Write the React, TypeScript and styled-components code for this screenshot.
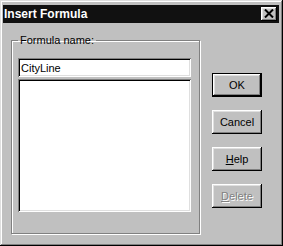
import styled, { createGlobalStyle, css } from 'styled-components';

const GlobalStyle = createGlobalStyle`
  html, body {
    margin: 0;
    padding: 0;
    background: #c0c0c0;
  }
  body {
    font-family: 'Liberation Sans', Arial, sans-serif;
    font-size: 11px;
  }
`;

const SWindow = styled.div`
  width: 283px;
  height: 246px;
  box-sizing: border-box;
  padding: 5px 4px 4px 3px;
  background: #c0c0c0;
  box-shadow: inset -1px -1px #000, inset 1px 1px #dfdfdf,
    inset -2px -2px #808080, inset 2px 2px #fff;
  display: flex;
  flex-direction: column;
`;

const STitleBar = styled.div`
  height: 18px;
  background: #111;
  display: flex;
  align-items: center;
  justify-content: space-between;
  padding: 0 2px 0 1px;
`;

const STitle = styled.span`
  color: #fff;
  font-weight: bold;
  font-size: 12px;
`;

const SCloseButton = styled.div`
  width: 16px;
  height: 14px;
  box-sizing: border-box;
  background: #c0c0c0;
  box-shadow: inset -1px -1px #000, inset 1px 1px #fff,
    inset -2px -2px #808080, inset 2px 2px #dfdfdf;
  display: flex;
  align-items: center;
  justify-content: center;
  padding: 0 1px 1px 0;
`;

const SBody = styled.div`
  display: flex;
  align-items: flex-start;
  padding: 11px 0 0 8px;
  gap: 12px;
`;

const SGroup = styled.fieldset`
  margin: 0;
  width: 189px;
  box-sizing: border-box;
  padding: 11px 8px 21px 6px;
  border: 1px solid #808080;
  box-shadow: inset 1px 1px #fff, 1px 1px #fff;
  display: flex;
  flex-direction: column;
  gap: 2px;
`;

const SLegend = styled.legend`
  padding: 0 2px;
  line-height: 13px;
  color: #000;
`;

const sunken = css`
  box-sizing: border-box;
  background: #fff;
  border: none;
  box-shadow: inset 1px 1px #808080, inset -1px -1px #fff,
    inset 2px 2px #000, inset -2px -2px #dfdfdf;
`;

const SInput = styled.div`
  ${sunken}
  height: 19px;
  padding: 0 3px;
  display: flex;
  align-items: center;
  color: #000;
`;

const SList = styled.div`
  ${sunken}
  height: 133px;
`;

const SButtons = styled.div`
  display: flex;
  flex-direction: column;
  gap: 13px;
  margin-top: 39px;
`;

const SButton = styled.div<{ $default?: boolean; $disabled?: boolean }>`
  width: 50px;
  height: 24px;
  box-sizing: border-box;
  display: flex;
  align-items: center;
  justify-content: center;
  color: ${(p) => (p.$disabled ? '#808080' : '#000')};
  ${(p) =>
    p.$disabled &&
    css`
      text-shadow: 1px 1px #fff;
    `}
  box-shadow: inset -1px -1px #000, inset 1px 1px #fff,
    inset -2px -2px #808080, inset 2px 2px #dfdfdf;
  ${(p) =>
    p.$default &&
    css`
      border: 1px solid #000;
    `}
`;

const CloseIcon = () => (
  <svg width="10" height="9" viewBox="0 0 10 9">
    <path d="M1 0.5 L9 8.5 M9 0.5 L1 8.5" stroke="#000" strokeWidth="2" />
  </svg>
);

export default function App() {
  return (
    <>
      <GlobalStyle />
      <SWindow>
        <STitleBar>
          <STitle>Insert Formula</STitle>
          <SCloseButton>
            <CloseIcon />
          </SCloseButton>
        </STitleBar>
        <SBody>
          <SGroup>
            <SLegend>Formula name:</SLegend>
            <SInput>CityLine</SInput>
            <SList />
          </SGroup>
          <SButtons>
            <SButton $default>OK</SButton>
            <SButton>Cancel</SButton>
            <SButton>
              <span>
                <u>H</u>elp
              </span>
            </SButton>
            <SButton $disabled>
              <span>
                <u>D</u>elete
              </span>
            </SButton>
          </SButtons>
        </SBody>
      </SWindow>
    </>
  );
}
